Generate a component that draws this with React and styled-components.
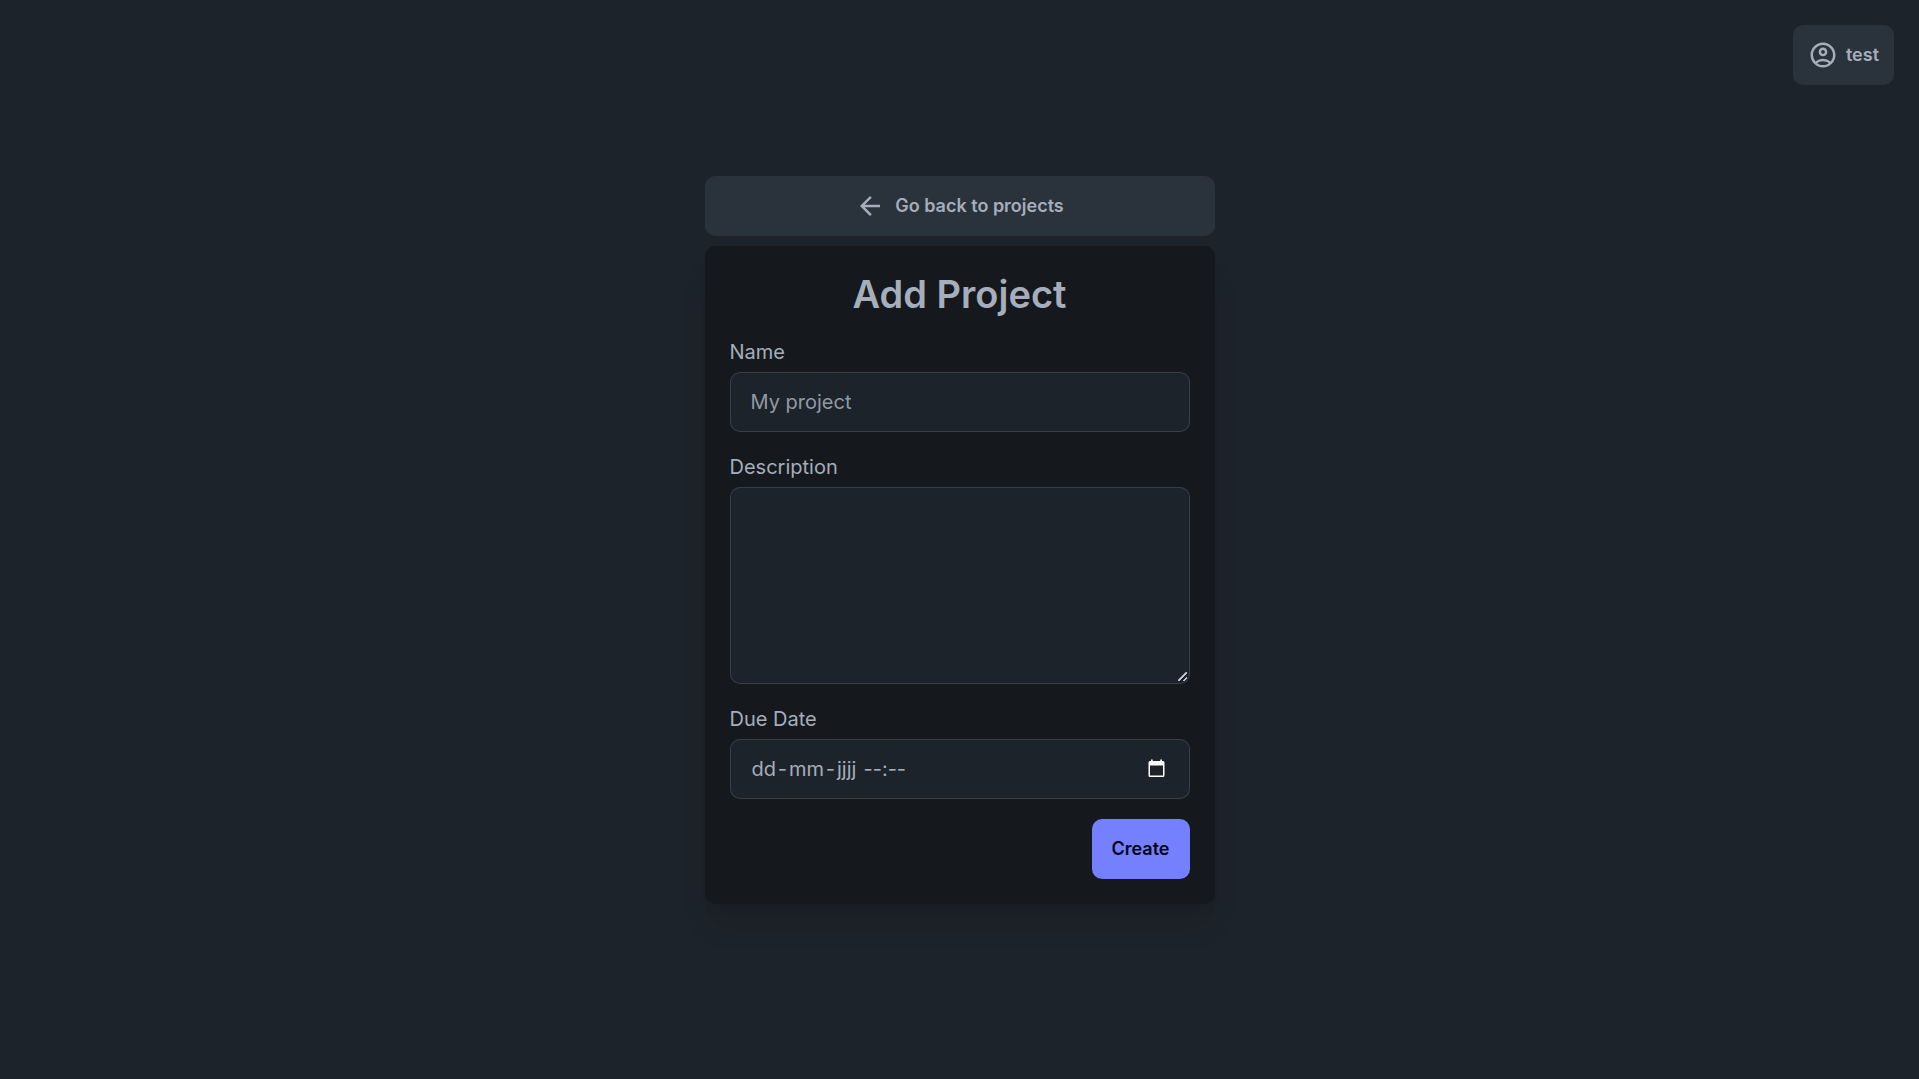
import React, { useState } from "react";
import styled, { createGlobalStyle } from "styled-components";
import { MdArrowBack, MdOutlineAccountCircle } from "react-icons/md";

const GlobalStyle = createGlobalStyle`
  *, *::before, *::after { box-sizing: border-box; }
  body {
    margin: 0;
    background: #1d232a;
    color: #a6adbb;
    font-family: Inter, "Liberation Sans", sans-serif;
    font-size: 20px;
    line-height: 30px;
    color-scheme: dark;
  }
`;

const Page = styled.div`
  min-height: 100vh;
  display: grid;
  grid-template-columns: 1fr minmax(0, 510px) 1fr;
  align-items: center;
`;

const Main = styled.main`
  grid-column: 2;
  display: flex;
  flex-direction: column;
  gap: 10px;
`;

const Account = styled.header`
  grid-column: 3;
  justify-self: end;
  align-self: start;
  padding: 25px;
`;

const Button = styled.button`
  display: inline-flex;
  align-items: center;
  justify-content: center;
  gap: ${({ $gap }) => $gap || 10}px;
  height: 60px;
  padding: 0 ${({ $pad }) => $pad || 20}px;
  border: 0;
  border-radius: 10px;
  background: ${({ $primary }) => ($primary ? "#7480ff" : "#2a323c")};
  color: ${({ $primary }) => ($primary ? "#050617" : "#a6adbb")};
  font-family: inherit;
  font-size: 18px;
  font-weight: 600;
  line-height: 20px;
  text-decoration: none;
  cursor: pointer;
`;

const Card = styled.form`
  display: flex;
  flex-direction: column;
  gap: 20px;
  padding: 25px;
  border-radius: 10px;
  background: #15191e;
  box-shadow: 0 25px 31px -6px rgba(0, 0, 0, 0.1), 0 10px 12px -7px rgba(0, 0, 0, 0.1);
`;

const Title = styled.h1`
  margin: 0;
  font-size: 38px;
  font-weight: 600;
  line-height: 46px;
  text-align: center;
`;

const Field = styled.div`
  display: flex;
  flex-direction: column;
  gap: 5px;
`;

const Box = styled.input`
  width: 100%;
  height: 60px;
  padding: 0 20px;
  border: 1px solid rgba(166, 173, 187, 0.2);
  border-radius: 10px;
  background: #1d232a;
  color: inherit;
  font: inherit;

  &::placeholder {
    color: #9299a5;
    opacity: 1;
  }
`;

const TextArea = styled(Box)`
  display: block;
  height: 197px;
  padding: 10px 20px;
  resize: vertical;

  &::-webkit-resizer {
    background: linear-gradient(
        135deg,
        transparent 43%,
        #c3c6cc 45%,
        #c3c6cc 56%,
        transparent 58%,
        transparent 73%,
        #c3c6cc 75%,
        #c3c6cc 86%,
        transparent 88%
      )
      right 2px bottom 2px / 9px 9px no-repeat;
  }
`;

const DateTimeBox = styled(Box)`
  display: flex;
  align-items: center;
`;

const Segment = styled.input`
  width: ${({ $width }) => $width}px;
  padding: 0 1px;
  border: 0;
  outline: 0;
  background: none;
  color: inherit;
  font: inherit;
  font-variant-numeric: ${({ $tabular }) => ($tabular ? "tabular-nums" : "normal")};

  &::placeholder {
    color: inherit;
    opacity: 1;
  }
`;

const PickerButton = styled.button`
  display: flex;
  align-items: center;
  margin-left: auto;
  padding: 0;
  border: 0;
  background: none;
  color: #fff;
  cursor: pointer;
`;

const Actions = styled.div`
  display: flex;
  justify-content: flex-end;
`;

function CalendarIcon() {
  return (
    <svg width="24" height="20" viewBox="0 0 24 20" fill="currentColor" aria-hidden="true">
      <path
        fillRule="evenodd"
        d="M6 .5h1.700v1.500h7.600V.5H17v1.500h1q1.500 0 1.500 1.500v13q0 1.500-1.500 1.500H5q-1.500 0-1.500-1.500v-13Q3.500 2 5 2h1zM5 6.500v10h13v-10z"
      />
    </svg>
  );
}

export default function App() {
  const [name, setName] = useState("");
  const [description, setDescription] = useState("");
  const [dueDate, setDueDate] = useState("");
  const [dueTime, setDueTime] = useState("");

  return (
    <>
      <GlobalStyle />
      <Page>
        <Main>
          <Button as="a" href="#projects">
            <MdArrowBack size={30} aria-hidden="true" />
            Go back to projects
          </Button>
          <Card onSubmit={(e) => e.preventDefault()}>
            <Title>Add Project</Title>
            <Field>
              <label htmlFor="name">Name</label>
              <Box
                id="name"
                type="text"
                placeholder="My project"
                value={name}
                onChange={(e) => setName(e.target.value)}
              />
            </Field>
            <Field>
              <label htmlFor="description">Description</label>
              <TextArea
                as="textarea"
                id="description"
                value={description}
                onChange={(e) => setDescription(e.target.value)}
              />
            </Field>
            <Field>
              <label htmlFor="due-date">Due Date</label>
              <DateTimeBox as="div">
                <Segment
                  id="due-date"
                  type="text"
                  $width={112}
                  $tabular
                  placeholder="dd-mm-jjjj"
                  value={dueDate}
                  onChange={(e) => setDueDate(e.target.value)}
                />
                <Segment
                  type="text"
                  $width={60}
                  aria-label="Due time"
                  placeholder="--:--"
                  value={dueTime}
                  onChange={(e) => setDueTime(e.target.value)}
                />
                <PickerButton type="button" aria-label="Pick a date">
                  <CalendarIcon />
                </PickerButton>
              </DateTimeBox>
            </Field>
            <Actions>
              <Button type="submit" $primary>Create</Button>
            </Actions>
          </Card>
        </Main>
        <Account>
          <Button type="button" $gap={8} $pad={15}>
            <MdOutlineAccountCircle size={30} aria-hidden="true" />
            test
          </Button>
        </Account>
      </Page>
    </>
  );
}
